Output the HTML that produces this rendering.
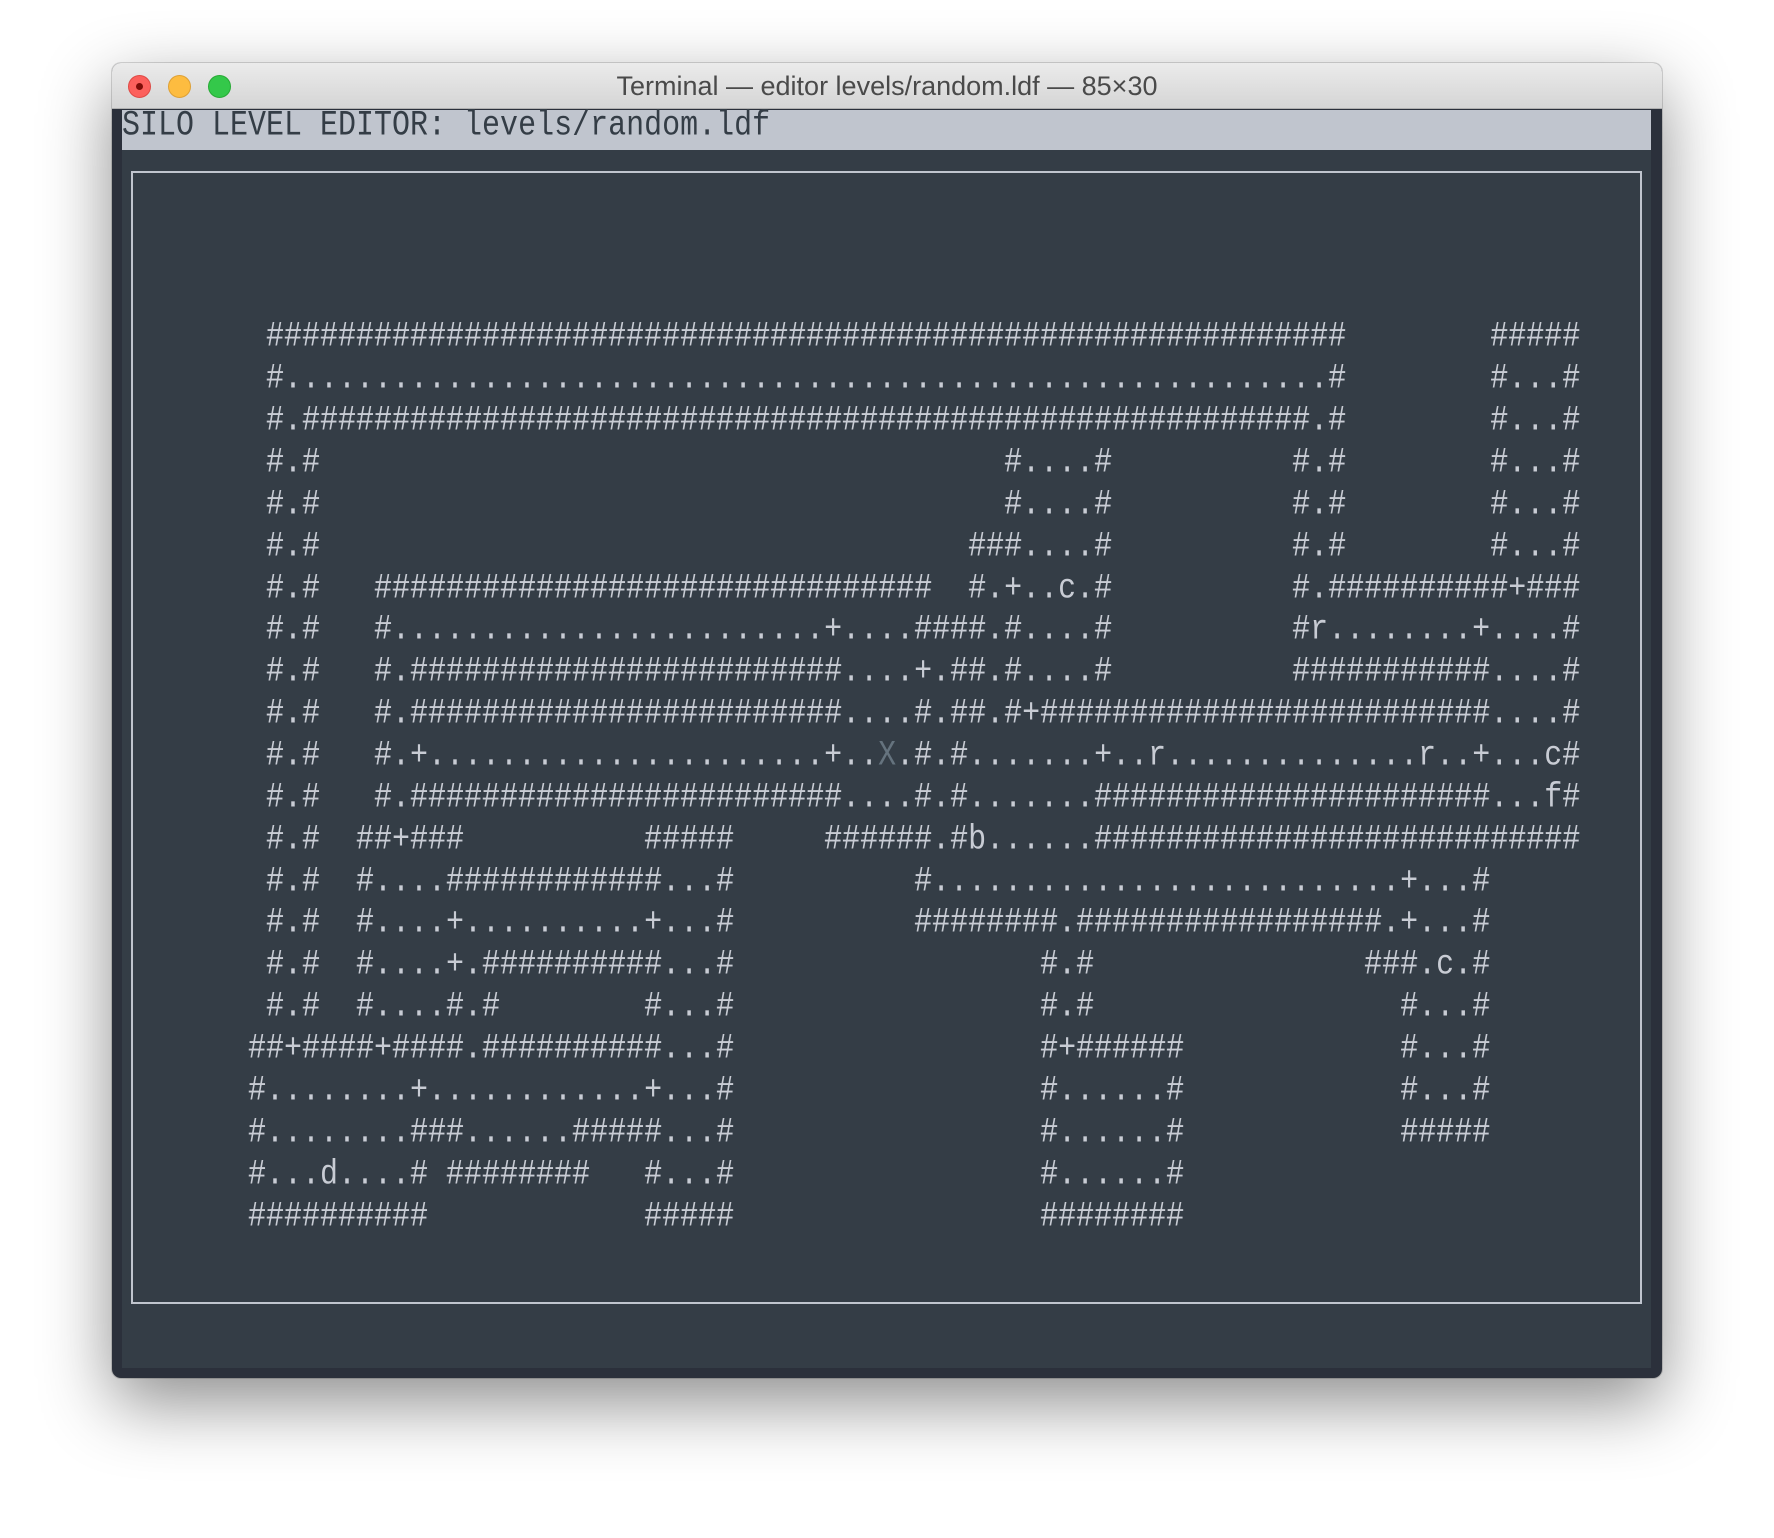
<!DOCTYPE html>
<html><head><meta charset="utf-8">
<style>
html,body{margin:0;padding:0;background:#fff;width:1774px;height:1538px;overflow:hidden;position:relative}
.win{position:absolute;left:112px;top:63px;width:1550px;height:1315px;border-radius:9px;background:#2b303b;box-shadow:0 25px 70px rgba(0,0,0,.45),0 0 0 1px rgba(0,0,0,.15);overflow:hidden}
.tb{position:absolute;left:0;top:0;width:100%;height:46px;background:linear-gradient(#ebebeb,#d5d5d5);border-bottom:1px solid #b0b0b0;box-sizing:border-box}
.tt{position:absolute;left:0;width:100%;top:8px;text-align:center;font:27px "Liberation Sans",sans-serif;color:#4a4a4a}
.dot{position:absolute;top:12px;width:23px;height:23px;border-radius:50%;box-sizing:border-box}
.content{position:absolute;left:10px;top:47px;width:1529px;height:1258px;background:#343d46}
.hdr{position:absolute;left:0;top:0;width:100%;height:40px;background:#c0c5ce}
.box{position:absolute;left:9px;top:61px;width:1511px;height:1133px;border:2px solid #c0c5ce;box-sizing:border-box}
.ln{position:absolute;left:0;height:42px;line-height:42px;font:30px "Liberation Mono",monospace;color:#c8ccd4;white-space:pre;transform:scaleY(1.18);transform-origin:50% 50%;width:1529px}
.ln i{font-style:normal;position:absolute;top:0}
.x{color:#65737e}
</style></head><body>
<div class="win">
  <div class="tb">
    <div class="dot" style="left:16px;background:#fc605c;border:1px solid #de4a45"><div style="position:absolute;left:7px;top:7px;width:7px;height:7px;border-radius:50%;background:#7e0d08"></div></div>
    <div class="dot" style="left:56px;background:#fdbc40;border:1px solid #dea034"></div>
    <div class="dot" style="left:96px;background:#34c84a;border:1px solid #27aa35"></div>
    <div class="tt">Terminal — editor levels/random.ldf — 85×30</div>
  </div>
  <div class="content">
    <div class="hdr"></div>
    <div class="ln" style="top:0px;color:#343d46"><i style="left:0">SILO LEVEL EDITOR: levels/random.ldf</i></div>
    <div class="box"></div>
    <div id="map" style="position:absolute;left:126px;top:2px;width:1400px;height:1256px">
<div class="ln" style="top:209px"><i style="left:1ch">############################################################</i><i style="left:69ch">#####</i></div>
<div class="ln" style="top:251px"><i style="left:1ch">#..........................................................#</i><i style="left:69ch">#...#</i></div>
<div class="ln" style="top:293px"><i style="left:1ch">#.########################################################.#</i><i style="left:69ch">#...#</i></div>
<div class="ln" style="top:335px"><i style="left:1ch">#.#</i><i style="left:42ch">#....#</i><i style="left:58ch">#.#</i><i style="left:69ch">#...#</i></div>
<div class="ln" style="top:377px"><i style="left:1ch">#.#</i><i style="left:42ch">#....#</i><i style="left:58ch">#.#</i><i style="left:69ch">#...#</i></div>
<div class="ln" style="top:419px"><i style="left:1ch">#.#</i><i style="left:40ch">###....#</i><i style="left:58ch">#.#</i><i style="left:69ch">#...#</i></div>
<div class="ln" style="top:461px"><i style="left:1ch">#.#</i><i style="left:7ch">###############################</i><i style="left:40ch">#.+..c.#</i><i style="left:58ch">#.##########+###</i></div>
<div class="ln" style="top:502px"><i style="left:1ch">#.#</i><i style="left:7ch">#........................+....####.#....#</i><i style="left:58ch">#r........+....#</i></div>
<div class="ln" style="top:544px"><i style="left:1ch">#.#</i><i style="left:7ch">#.########################....+.##.#....#</i><i style="left:58ch">###########....#</i></div>
<div class="ln" style="top:586px"><i style="left:1ch">#.#</i><i style="left:7ch">#.########################....#.##.#+#########################....#</i></div>
<div class="ln" style="top:628px"><i style="left:1ch">#.#</i><i style="left:7ch">#.+......................+..</i><i style="left:35ch" class="x">X</i><i style="left:36ch">.#.#.......+..r..............r..+...c#</i></div>
<div class="ln" style="top:670px"><i style="left:1ch">#.#</i><i style="left:7ch">#.########################....#.#.......######################...f#</i></div>
<div class="ln" style="top:712px"><i style="left:1ch">#.#</i><i style="left:6ch">##+###</i><i style="left:22ch">#####</i><i style="left:32ch">######.#b......###########################</i></div>
<div class="ln" style="top:754px"><i style="left:1ch">#.#</i><i style="left:6ch">#....############...#</i><i style="left:37ch">#..........................+...#</i></div>
<div class="ln" style="top:795px"><i style="left:1ch">#.#</i><i style="left:6ch">#....+..........+...#</i><i style="left:37ch">########.#################.+...#</i></div>
<div class="ln" style="top:837px"><i style="left:1ch">#.#</i><i style="left:6ch">#....+.##########...#</i><i style="left:44ch">#.#</i><i style="left:62ch">###.c.#</i></div>
<div class="ln" style="top:879px"><i style="left:1ch">#.#</i><i style="left:6ch">#....#.#</i><i style="left:22ch">#...#</i><i style="left:44ch">#.#</i><i style="left:64ch">#...#</i></div>
<div class="ln" style="top:921px"><i style="left:0ch">##+####+####.##########...#</i><i style="left:44ch">#+######</i><i style="left:64ch">#...#</i></div>
<div class="ln" style="top:963px"><i style="left:0ch">#........+............+...#</i><i style="left:44ch">#......#</i><i style="left:64ch">#...#</i></div>
<div class="ln" style="top:1005px"><i style="left:0ch">#........###......#####...#</i><i style="left:44ch">#......#</i><i style="left:64ch">#####</i></div>
<div class="ln" style="top:1047px"><i style="left:0ch">#...d....# ########</i><i style="left:22ch">#...#</i><i style="left:44ch">#......#</i></div>
<div class="ln" style="top:1089px"><i style="left:0ch">##########</i><i style="left:22ch">#####</i><i style="left:44ch">########</i></div>
    </div>
  </div>
</div>
</body></html>
